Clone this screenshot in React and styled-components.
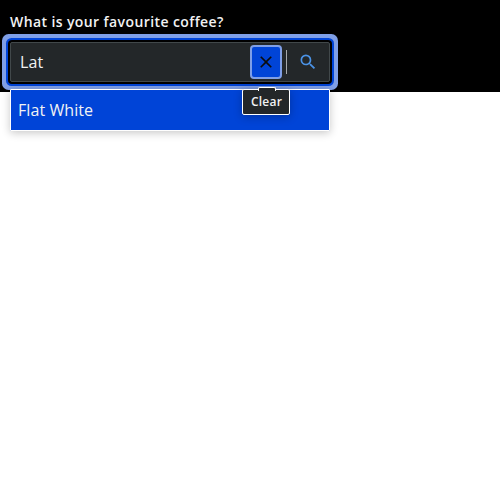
import React from "react";
import styled, { createGlobalStyle } from "styled-components";

const GlobalStyle = createGlobalStyle`
  *, *::before, *::after { box-sizing: border-box; }
  body {
    margin: 0;
    background: #fff;
    font-family: "Open Sans", "Noto Sans", sans-serif;
  }
`;

const Page = styled.main`
  min-height: 100vh;
  height: 500px;
`;

const Panel = styled.div`
  height: 92px;
  padding: 10px;
  background: #000;
`;

const Field = styled.div`
  width: 320px;
`;

const Label = styled.label`
  display: block;
  height: 24px;
  margin-bottom: 8px;
  color: #f1f2f3;
  font-size: 14px;
  font-weight: 600;
  line-height: 24px;
  letter-spacing: 0.4px;
  white-space: nowrap;
`;

const Control = styled.div`
  position: relative;
  display: flex;
  align-items: center;
  height: 40px;
  padding: 0 9px;
  border: 1px solid #41484a;
  border-radius: 2px;
  background: #232729;
  box-shadow: 0 0 0 2px #000, 0 0 0 4px #0044d7, 0 0 0 8px #7f9fe7;
`;

const Input = styled.input`
  flex: 1;
  min-width: 0;
  padding: 0;
  border: 0;
  outline: 0;
  background: transparent;
  color: #f1f2f3;
  font: 400 16px/24px "Open Sans", "Noto Sans", sans-serif;
  letter-spacing: 0.005em;
`;

const ClearButton = styled.button`
  position: relative;
  display: flex;
  flex: none;
  align-items: center;
  justify-content: center;
  width: 32px;
  height: 34px;
  margin-right: 4px;
  padding: 0;
  border: 2px solid #7f9fe7;
  border-radius: 4px;
  background: #0044d7;
  color: #0b0c0c;
`;

const Divider = styled.span`
  flex: none;
  width: 1px;
  height: 24px;
  background: #a6a9ab;
`;

const SearchButton = styled.button`
  display: flex;
  flex: none;
  align-items: center;
  justify-content: center;
  width: 24px;
  height: 32px;
  margin-left: 9px;
  padding: 0;
  border: 0;
  background: transparent;
  color: #4b93e6;
`;

const Icon = styled.svg`
  display: block;
  width: 20px;
  height: 20px;
  fill: currentColor;
`;

const Menu = styled.ul`
  position: absolute;
  top: 46px;
  left: -1px;
  width: 320px;
  margin: 0;
  padding: 0;
  border: 1px solid #fff;
  border-radius: 1px;
  background: #0044d7;
  box-shadow: 0 2px 8px rgba(0, 0, 0, 0.22);
  list-style: none;
`;

const Option = styled.li`
  height: 40px;
  padding: 8px 7px;
  color: #f1f2f3;
  font-size: 16px;
  line-height: 24px;
  letter-spacing: 0.005em;
`;

const Tooltip = styled.div`
  position: absolute;
  z-index: 2;
  top: 46px;
  left: 231px;
  width: 48px;
  height: 26px;
  padding-left: 1px;
  border: 1px solid #fff;
  border-radius: 2px;
  background: #232729;
  box-shadow: 0 2px 8px rgba(0, 0, 0, 0.25);
  color: #f1f2f3;
  font-size: 12px;
  font-weight: 600;
  line-height: 24px;
  letter-spacing: 0.02em;
  text-align: center;

  &::before {
    content: "";
    position: absolute;
    top: -3px;
    left: 15px;
    width: 18px;
    height: 4px;
    border: 1px solid #fff;
    border-bottom: 0;
    border-radius: 2px 2px 0 0;
    background: #232729;
  }
`;

export default function App() {
  return (
    <Page>
      <GlobalStyle />
      <Panel>
        <Field>
          <Label htmlFor="coffee">What is your favourite coffee?</Label>
          <Control>
            <Input id="coffee" defaultValue="Lat" autoComplete="off" />
            <ClearButton type="button" aria-label="Clear">
              <Icon viewBox="0 0 24 24">
                <path d="M19 6.41 17.59 5 12 10.59 6.41 5 5 6.41 10.59 12 5 17.59 6.41 19 12 13.41 17.59 19 19 17.59 13.41 12z" />
              </Icon>
            </ClearButton>
            <Divider />
            <SearchButton type="button" aria-label="Search">
              <Icon viewBox="0 0 24 24">
                <path d="M15.5 14h-.79l-.28-.27A6.471 6.471 0 0 0 16 9.5 6.5 6.5 0 1 0 9.5 16c1.61 0 3.09-.59 4.23-1.57l.27.28v.79l5 4.99L20.49 19l-4.99-5zm-6 0C7.01 14 5 11.99 5 9.5S7.01 5 9.5 5 14 7.01 14 9.5 11.99 14 9.5 14z" />
              </Icon>
            </SearchButton>
            <Menu role="listbox">
              <Option role="option">Flat White</Option>
            </Menu>
            <Tooltip role="tooltip">Clear</Tooltip>
          </Control>
        </Field>
      </Panel>
    </Page>
  );
}
